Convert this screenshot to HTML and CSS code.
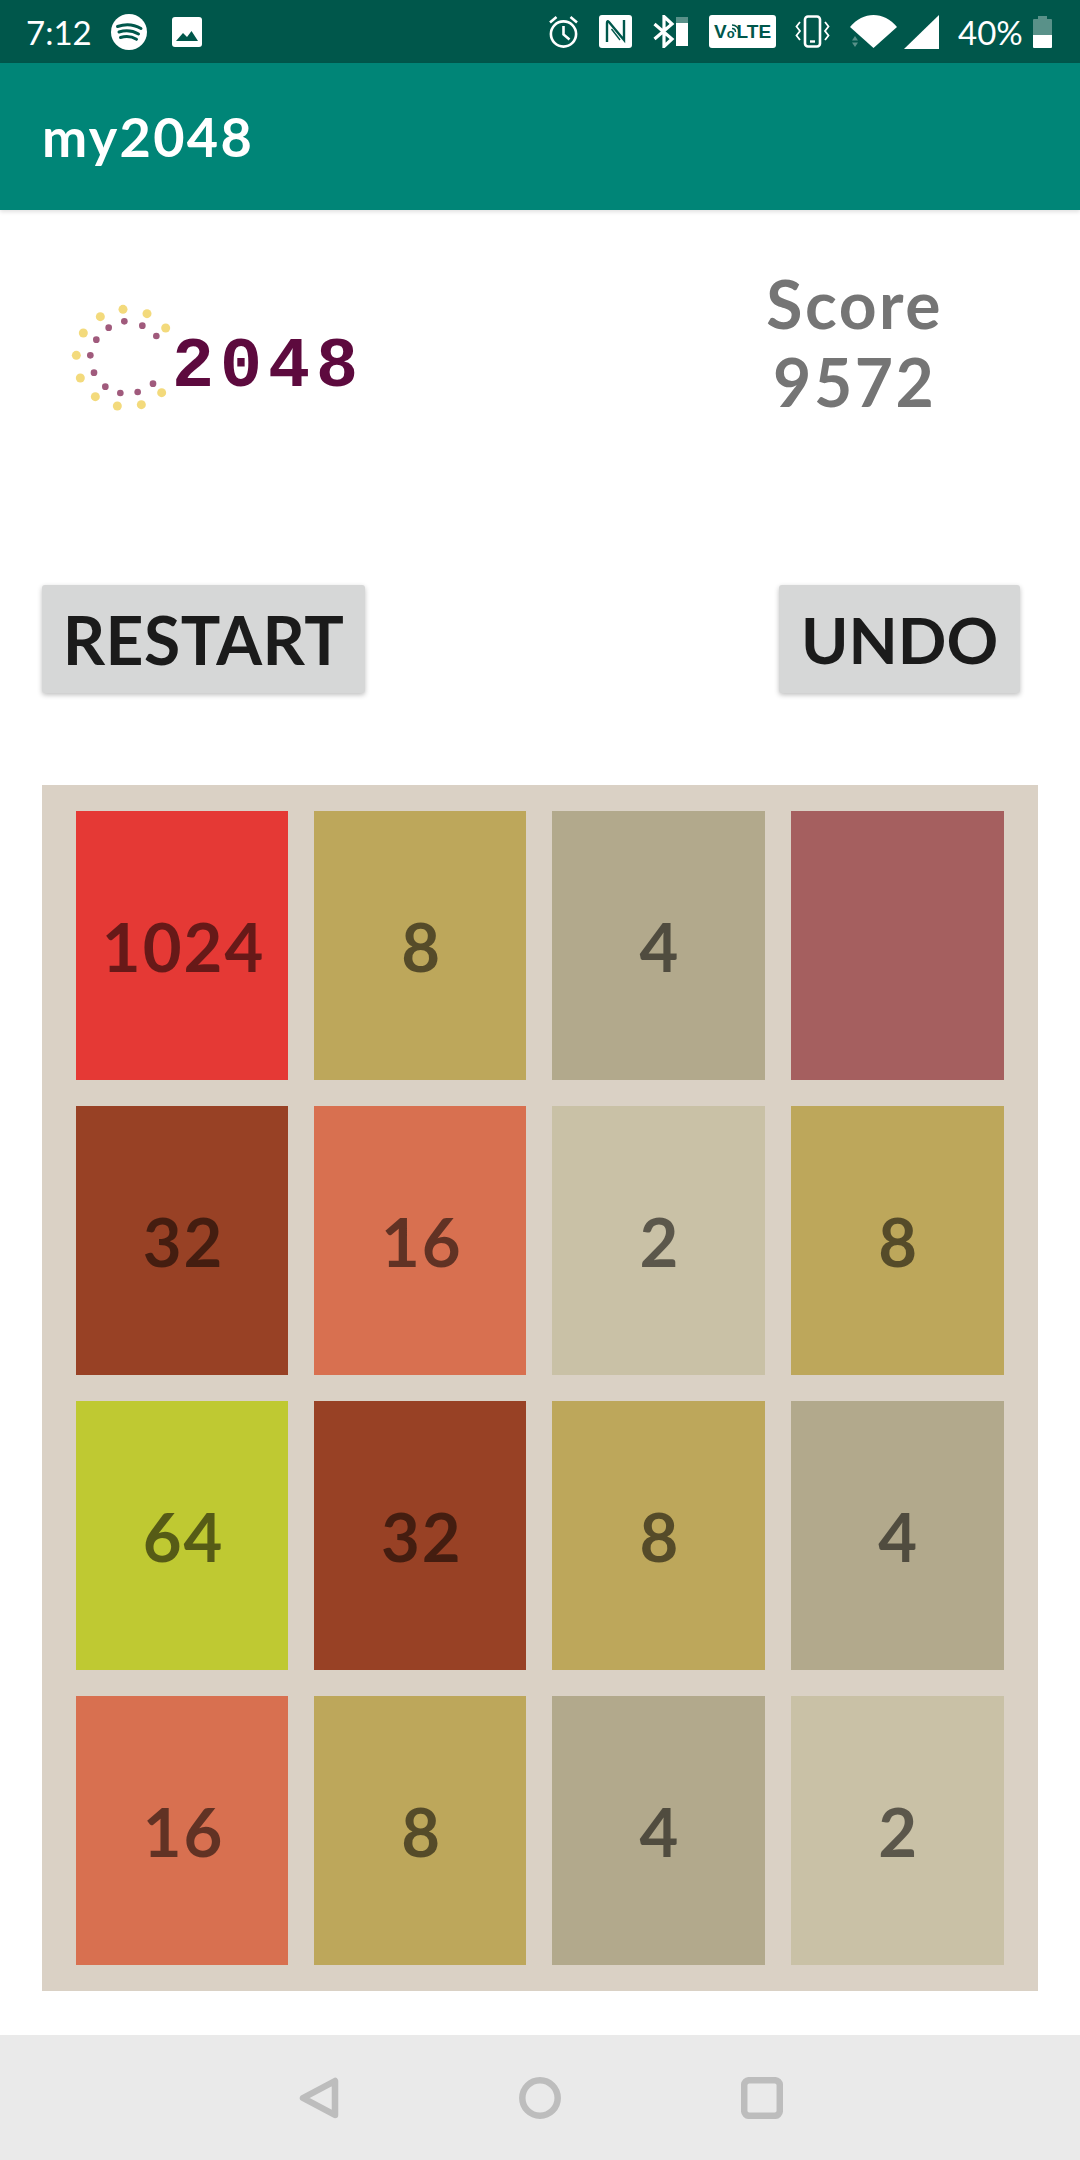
FILE: index.html
```html
<!DOCTYPE html>
<html>
<head>
    <title>my2048</title>
    <link rel="stylesheet" href="styles.css">
</head>
<body>
    <div class="status-bar">
        <div class="status-left">
            <span class="status-time">7:12</span>
            <svg class="ic-spotify" width="36" height="36" viewBox="0 0 36 36">
                <circle cx="18" cy="18" r="18" fill="#fff"/>
                <path d="M6.5 12.5 C14 10 23 10.5 30 14.5 M8 18 C14.5 16 22 16.8 27.5 20 M9.5 23.5 C15 22 21 22.6 25.5 25.3" fill="none" stroke="#00574b" stroke-width="3" stroke-linecap="round"/>
            </svg>
            <svg class="ic-image" width="30" height="30" viewBox="0 0 30 30">
                <rect width="30" height="30" rx="3" fill="#fff"/>
                <path d="M4 24 L11 16 L15 20 L19.5 14 L26 24 Z" fill="#00574b"/>
            </svg>
        </div>
        <div class="status-right">
            <svg class="ic-alarm" width="31" height="33" viewBox="0 0 31 33" fill="none" stroke="#fff" stroke-width="2.6">
                <circle cx="15.5" cy="19" r="12.6"/>
                <path d="M15.5 11 V19.5 L21.5 24.5 M2 7.5 L8.5 2 M29 7.5 L22.5 2"/>
            </svg>
            <svg class="ic-nfc" width="33" height="33" viewBox="0 0 33 33">
                <rect width="33" height="33" rx="3" fill="#fff"/>
                <path d="M8 27 V8 Q8 5 10 7 L25 25 V5" fill="none" stroke="#00574b" stroke-width="2.4"/>
                <path d="M12.5 14 L21 25" fill="none" stroke="#00574b" stroke-width="1.4"/>
            </svg>
            <svg class="ic-bt" width="35" height="33" viewBox="0 0 35 33">
                <path d="M1.5 9 L19 24 L11 31.5 V1.5 L19 9 L1.5 24" fill="none" stroke="#fff" stroke-width="3.2"/>
                <rect x="23" y="2" width="12" height="6" fill="#fff" opacity=".35"/>
                <rect x="23" y="8" width="12" height="23" fill="#fff"/>
            </svg>
            <span class="volte">V<span class="volte-o">o<svg class="volte-arc" width="10" height="10" viewBox="0 0 10 10" fill="none" stroke="#00574b" stroke-width="1.5"><path d="M1 2 C5 2 8 5 8 9 M1 5.5 C3.5 5.5 4.5 7 4.5 9"/></svg></span>LTE</span>
            <svg class="ic-vibrate" width="35" height="33" viewBox="0 0 35 33" fill="none" stroke="#fff">
                <rect x="10" y="1.5" width="15" height="30" rx="3" stroke-width="2.6"/>
                <path d="M15 26.5 H20" stroke-width="2.4"/>
                <path d="M5 7 L1.5 11.5 L5 16 L1.5 20.5 L5 25 M30 7 L33.5 11.5 L30 16 L33.5 20.5 L30 25" stroke-width="1.8"/>
            </svg>
            <svg class="ic-wifi" width="47" height="33" viewBox="0 0 47 33">
                <path d="M0 12 C13 -4 34 -4 47 12 L23.5 33 Z" fill="#fff"/>
                <path d="M2 25.5 L5 21 L8 25.5 Z M2 27.5 H8 L5 32 Z" fill="#fff" opacity=".35"/>
            </svg>
            <svg class="ic-signal" width="35" height="34" viewBox="0 0 35 34">
                <path d="M35 0 V34 H0 Z" fill="#fff"/>
            </svg>
            <span class="status-pct">40%</span>
            <svg class="ic-battery" width="19" height="33" viewBox="0 0 19 33">
                <path d="M1 4 H5 V1 H14 V4 H18 Q19 4 19 5 V20 H0 V5 Q0 4 1 4 Z" fill="#fff" opacity=".35"/>
                <path d="M0 20 H19 V32 Q19 33 18 33 H1 Q0 33 0 32 Z" fill="#fff"/>
            </svg>
        </div>
    </div>

    <div class="app-bar">my2048</div>

    <div class="main">
        <div class="top-row">
            <div class="logo">
                <svg class="logo-dots" width="112" height="112" viewBox="0 0 336 336">
                    <g fill="#f3da7c">
                        <circle cx="168" cy="28" r="13.5"/><circle cx="240" cy="41" r="13.5"/><circle cx="296" cy="84" r="13.5"/>
                        <circle cx="284" cy="278" r="13.5"/><circle cx="223" cy="314" r="13.5"/><circle cx="151" cy="318" r="13.5"/>
                        <circle cx="85" cy="290" r="13.5"/><circle cx="40" cy="234" r="13.5"/><circle cx="28" cy="166" r="13.5"/>
                        <circle cx="49" cy="99" r="13.5"/><circle cx="100" cy="50" r="13.5"/>
                    </g>
                    <g fill="#a05a7c">
                        <circle cx="172" cy="64" r="10"/><circle cx="226" cy="77" r="10"/><circle cx="268" cy="108" r="10"/>
                        <circle cx="258" cy="251" r="10"/><circle cx="212" cy="276" r="10"/><circle cx="160" cy="279" r="10"/>
                        <circle cx="115" cy="260" r="10"/><circle cx="81" cy="218" r="10"/><circle cx="70" cy="166" r="10"/>
                        <circle cx="88" cy="119" r="10"/><circle cx="125" cy="83" r="10"/>
                    </g>
                </svg>
                <span class="logo-text">2048</span>
            </div>
            <div class="score">
                <div>Score</div>
                <div>9572</div>
            </div>
        </div>

        <div class="button-row">
            <button class="btn">RESTART</button>
            <button class="btn btn-undo">UNDO</button>
        </div>

        <div class="board">
            <div class="tile t1024">1024</div>
            <div class="tile t8">8</div>
            <div class="tile t4">4</div>
            <div class="tile t-empty"></div>
            <div class="tile t32">32</div>
            <div class="tile t16">16</div>
            <div class="tile t2">2</div>
            <div class="tile t8">8</div>
            <div class="tile t64">64</div>
            <div class="tile t32">32</div>
            <div class="tile t8">8</div>
            <div class="tile t4">4</div>
            <div class="tile t16">16</div>
            <div class="tile t8">8</div>
            <div class="tile t4">4</div>
            <div class="tile t2">2</div>
        </div>
    </div>

    <div class="nav-bar">
        <svg width="42" height="42" viewBox="0 0 42 42">
            <path d="M6 21 L38 4 V38 Z" fill="none" stroke="#bdbdbd" stroke-width="6.5" stroke-linejoin="round"/>
        </svg>
        <svg width="42" height="42" viewBox="0 0 42 42">
            <circle cx="21" cy="21" r="17.7" fill="none" stroke="#bdbdbd" stroke-width="6.5"/>
        </svg>
        <svg width="42" height="42" viewBox="0 0 42 42">
            <rect x="3.2" y="3.2" width="35.6" height="35.6" rx="5" fill="none" stroke="#bdbdbd" stroke-width="6.5"/>
        </svg>
    </div>
</body>
</html>
```

FILE: styles.css
```css
* {
    box-sizing: border-box;
}
body {
    margin: 0;
    width: 1080px;
    height: 2160px;
    display: flex;
    flex-direction: column;
    background: #fff;
    font-family: Lato, "Open Sans", sans-serif;
}
svg {
    display: block;
    flex: none;
}

.status-bar {
    height: 63px;
    background: #00574b;
    color: #fff;
    display: flex;
    justify-content: space-between;
    align-items: center;
    padding: 0 28px 0 26px;
}
.status-left, .status-right {
    display: flex;
    align-items: center;
}
.status-time {
    font-size: 33px;
    width: 85px;
}
.ic-image {
    margin-left: 25px;
}
.ic-nfc { margin-left: 20px; }
.ic-bt { margin-left: 21px; }
.ic-vibrate { margin-left: 19px; }
.ic-wifi { margin-left: 20px; }
.ic-signal { margin-left: 7px; }
.ic-battery { margin-left: 14px; }
.volte {
    margin-left: 21px;
    width: 67px;
    height: 33px;
    background: #fff;
    border-radius: 3px;
    color: #00574b;
    font-family: "Liberation Sans", sans-serif;
    font-weight: 700;
    font-size: 19px;
    line-height: 34px;
    text-align: center;
}
.volte-o {
    position: relative;
    font-size: 13px;
    margin-right: 2px;
}
.volte-arc {
    position: absolute;
    top: -3px;
    right: -6px;
}
.status-pct {
    margin-left: 19px;
    font-size: 33px;
    width: 61px;
    white-space: nowrap;
}

.app-bar {
    height: 147px;
    background: #008577;
    color: #fff;
    font-size: 54px;
    font-weight: 700;
    letter-spacing: 2.3px;
    line-height: 147px;
    padding-left: 42px;
    box-shadow: 0 2px 4px rgba(0,0,0,0.12);
    position: relative;
}

.main {
    flex: 1;
    padding: 0 42px;
}
.top-row {
    display: flex;
    justify-content: space-between;
    height: 375px;
    padding: 0 95px 0 25px;
}
.logo {
    display: flex;
    align-items: flex-start;
    margin-top: 90px;
}
.logo-text {
    font-family: "Liberation Mono", monospace;
    font-weight: 700;
    font-size: 70px;
    letter-spacing: 6px;
    line-height: 80px;
    color: #5d0a3e;
    margin: 28px 0 0 -7px;
}
.score {
    margin-top: 55px;
    font-size: 66px;
    font-weight: 700;
    letter-spacing: 2.5px;
    line-height: 78px;
    color: #757575;
    text-align: center;
}

.button-row {
    display: flex;
    justify-content: space-between;
    padding-right: 18px;
}
.btn {
    height: 108px;
    width: 323px;
    padding: 0;
    border: none;
    border-radius: 3px;
    background: #d6d7d7;
    color: #1b1b1b;
    font-family: inherit;
    font-size: 66px;
    font-weight: 700;
    letter-spacing: 0.5px;
    box-shadow: 0 2px 5px rgba(0,0,0,0.25);
}
.btn-undo {
    width: 241px;
    font-size: 64px;
    letter-spacing: 0;
}

.board {
    margin-top: 92px;
    height: 1206px;
    background: #dad1c5;
    padding: 26px 34px;
    display: grid;
    grid-template-columns: repeat(3, 212.2px) 213px;
    grid-template-rows: repeat(4, 1fr);
    gap: 26px;
}
.tile {
    display: flex;
    justify-content: center;
    align-items: center;
    padding-left: 3px;
    font-size: 67px;
    font-weight: 700;
    letter-spacing: 2px;
    color: rgba(0,0,0,0.55);
}
.t2 { background: #c9c1a6; }
.t4 { background: #b2a98c; }
.t8 { background: #bda75b; }
.t16 { background: #d87050; }
.t32 { background: #984125; }
.t64 { background: #bfc932; }
.t1024 { background: #e53935; }
.t-empty { background: #a55f5f; }

.nav-bar {
    height: 125px;
    background: #eaeaea;
    display: flex;
    justify-content: center;
    align-items: center;
    gap: 180px;
}
```
